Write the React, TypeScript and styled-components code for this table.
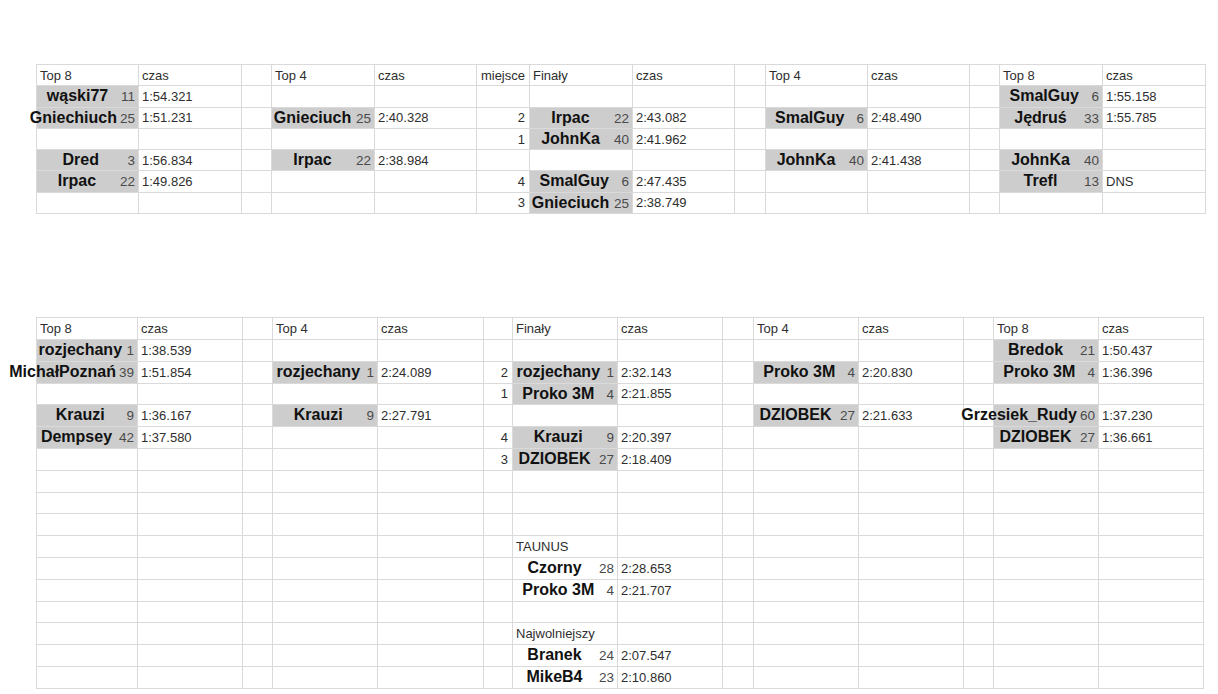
import React from "react";
import styled, { createGlobalStyle } from "styled-components";

type Entry = { name: string; seed: number; shaded: boolean };
type CellData = string | Entry;
type Row = Record<number, CellData>;
type Kind = "name" | "time" | "gap" | "place";

const KINDS: Kind[] = [
  "name", "time", "gap", "name", "time", "place", "name",
  "time", "gap", "name", "time", "gap", "name", "time",
];

const e = (name: string, seed: number): Entry => ({ name, seed, shaded: true });
const p = (name: string, seed: number): Entry => ({ name, seed, shaded: false });

const topHeader: Row = {
  0: "Top 8", 1: "czas", 3: "Top 4", 4: "czas", 5: "miejsce", 6: "Finały",
  7: "czas", 9: "Top 4", 10: "czas", 12: "Top 8", 13: "czas",
};

const topRows: Row[] = [
  topHeader,
  { 0: e("wąski77", 11), 1: "1:54.321", 12: e("SmalGuy", 6), 13: "1:55.158" },
  {
    0: e("Gniechiuch", 25), 1: "1:51.231", 3: e("Gnieciuch", 25), 4: "2:40.328",
    5: "2", 6: e("Irpac", 22), 7: "2:43.082", 9: e("SmalGuy", 6), 10: "2:48.490",
    12: e("Jędruś", 33), 13: "1:55.785",
  },
  { 5: "1", 6: e("JohnKa", 40), 7: "2:41.962" },
  {
    0: e("Dred", 3), 1: "1:56.834", 3: e("Irpac", 22), 4: "2:38.984",
    9: e("JohnKa", 40), 10: "2:41.438", 12: e("JohnKa", 40),
  },
  {
    0: e("Irpac", 22), 1: "1:49.826", 5: "4", 6: e("SmalGuy", 6), 7: "2:47.435",
    12: e("Trefl", 13), 13: "DNS",
  },
  { 5: "3", 6: e("Gnieciuch", 25), 7: "2:38.749" },
];

const bottomRows: Row[] = [
  { ...topHeader, 5: "" },
  { 0: e("rozjechany", 1), 1: "1:38.539", 12: e("Bredok", 21), 13: "1:50.437" },
  {
    0: e("MichałPoznań", 39), 1: "1:51.854", 3: e("rozjechany", 1), 4: "2:24.089",
    5: "2", 6: e("rozjechany", 1), 7: "2:32.143", 9: e("Proko 3M", 4), 10: "2:20.830",
    12: e("Proko 3M", 4), 13: "1:36.396",
  },
  { 5: "1", 6: e("Proko 3M", 4), 7: "2:21.855" },
  {
    0: e("Krauzi", 9), 1: "1:36.167", 3: e("Krauzi", 9), 4: "2:27.791",
    9: e("DZIOBEK", 27), 10: "2:21.633", 12: e("Grzesiek_Rudy", 60), 13: "1:37.230",
  },
  {
    0: e("Dempsey", 42), 1: "1:37.580", 5: "4", 6: e("Krauzi", 9), 7: "2:20.397",
    12: e("DZIOBEK", 27), 13: "1:36.661",
  },
  { 5: "3", 6: e("DZIOBEK", 27), 7: "2:18.409" },
  {},
  {},
  {},
  { 6: "TAUNUS" },
  { 6: p("Czorny", 28), 7: "2:28.653" },
  { 6: p("Proko 3M", 4), 7: "2:21.707" },
  {},
  { 6: "Najwolniejszy" },
  { 6: p("Branek", 24), 7: "2:07.547" },
  { 6: p("MikeB4", 23), 7: "2:10.860" },
];

const topCols = [102, 103, 30, 103, 102, 53, 103, 102, 31, 102, 102, 30, 103, 103];
const bottomCols = [101, 105, 30, 105, 106, 29, 105, 105, 31, 105, 105, 30, 105, 105];

const GlobalStyle = createGlobalStyle`
  body {
    margin: 0;
    background: #ffffff;
    font-family: "Liberation Sans", Arial, sans-serif;
    color: #2b2b2b;
  }
`;

const Page = styled.div`
  display: flex;
  flex-direction: column;
  gap: 103px;
  padding: 64px 0 0 36px;
`;

const Sheet = styled.div<{ $cols: number[]; $row: number }>`
  display: grid;
  grid-template-columns: ${(p) => p.$cols.map((w) => `${w}px`).join(" ")};
  grid-auto-rows: ${(p) => p.$row}px;
  width: max-content;
  border-top: 1px solid #dadada;
  border-left: 1px solid #dadada;
`;

const Cell = styled.div<{ $right?: boolean }>`
  box-sizing: border-box;
  display: flex;
  align-items: center;
  justify-content: ${(p) => (p.$right ? "flex-end" : "flex-start")};
  min-width: 0;
  padding: 0 4px 0 3px;
  border-right: 1px solid #dadada;
  border-bottom: 1px solid #dadada;
  font-size: 13px;
  color: #2e2e2e;
  white-space: nowrap;
`;

const EntryCell = styled(Cell)<{ $shaded: boolean }>`
  align-items: baseline;
  padding: 1px 3px 0 0;
  background: ${(p) => (p.$shaded ? "#cdcdcd" : "transparent")};
`;

const Name = styled.div`
  flex: 1 1 0;
  min-width: 0;
  display: flex;
  direction: rtl;
  justify-content: safe center;

  span {
    direction: ltr;
    font-size: 16px;
    font-weight: 700;
    color: #111111;
    white-space: nowrap;
  }
`;

const Seed = styled.span`
  flex: none;
  padding-left: 3px;
  font-size: 13.5px;
  color: #4a4a4a;
`;

const SheetTable = ({ rows, cols, rowHeight }: { rows: Row[]; cols: number[]; rowHeight: number }) => (
  <Sheet $cols={cols} $row={rowHeight}>
    {rows.map((row, r) =>
      KINDS.map((kind, c) => {
        const cell = row[c];
        const key = `${r}-${c}`;
        if (cell && typeof cell === "object") {
          return (
            <EntryCell key={key} $shaded={cell.shaded}>
              <Name>
                <span>{cell.name}</span>
              </Name>
              <Seed>{cell.seed}</Seed>
            </EntryCell>
          );
        }
        return (
          <Cell key={key} $right={kind === "place"}>
            {cell ?? ""}
          </Cell>
        );
      })
    )}
  </Sheet>
);

const App = () => (
  <>
    <GlobalStyle />
    <Page>
      <SheetTable rows={topRows} cols={topCols} rowHeight={21.3} />
      <SheetTable rows={bottomRows} cols={bottomCols} rowHeight={21.82} />
    </Page>
  </>
);

export default App;
